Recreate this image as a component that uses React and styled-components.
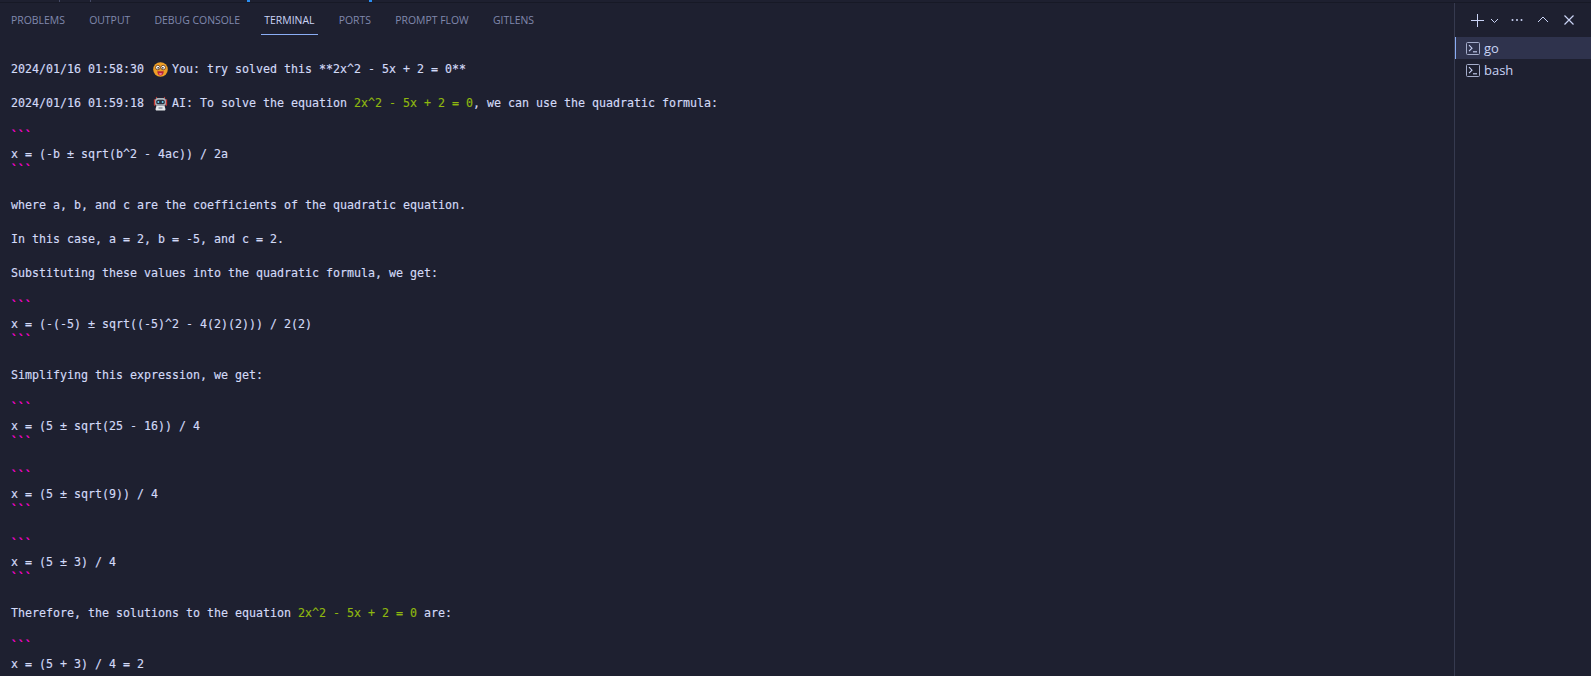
import React from "react";
import styled, { createGlobalStyle } from "styled-components";

const Global = createGlobalStyle`
  html, body { margin: 0; padding: 0; height: 100%; background: #1e2030; overflow: hidden; }
`;

const Page = styled.div`
  height: 676px;
  display: flex;
  flex-direction: column;
  background: #1e2030;
`;

// what is left of the editor's status line above the panel
const TopEdge = styled.div`
  height: 3px;
  box-sizing: border-box;
  flex: none;
  background-color: #1e2030;
  background-image: linear-gradient(#454a66, #454a66), linear-gradient(#454a66, #454a66),
    linear-gradient(#2b8df0, #2b8df0), linear-gradient(#2b8df0, #2b8df0);
  background-size: 1px 2px, 1px 2px, 3px 2px, 3px 2px;
  background-position: 59px 0, 90px 0, 247px 0, 369px 0;
  background-repeat: no-repeat;
  border-bottom: 1px solid #171926;
`;

const Panel = styled.div`
  flex: 1;
  display: grid;
  grid-template-columns: 1fr 137px;
  min-height: 0;
`;

const Main = styled.div`
  display: flex;
  flex-direction: column;
  min-width: 0;
  overflow: hidden;
`;

const TabBar = styled.div`
  display: flex;
  gap: 18.2px;
  height: 32px;
  padding-left: 8px;
  font: 10.45px "Open Sans", sans-serif;
`;

const Tab = styled.div`
  display: flex;
  align-items: center;
  height: 32px;
  padding: 2px 3px 0;
  box-sizing: border-box;
  color: ${(p) => (p.$active ? "#cad3f5" : "#8088ad")};
  border-bottom: 1px solid ${(p) => (p.$active ? "#8aadf4" : "transparent")};
`;

const Output = styled.div`
  padding: 26px 0 0 11px;
  font: 11.63px/17px "DejaVu Sans Mono", monospace;
  color: #d3daf7;
  white-space: pre;
  -webkit-text-stroke: 0.15px currentColor;
`;

const Line = styled.div`
  height: 17px;
  display: flex;
  align-items: center;
`;

const Green = styled.span`
  color: #8fb80f;
`;

const Fence = styled.span`
  color: #ff00d4;
  font-weight: 700;
  transform: translateY(-1px);
`;

const EmojiSlot = styled.svg`
  width: 15px;
  height: 15px;
  margin: 0 4px 0 2px;
  flex: none;
`;

const Side = styled.div`
  border-left: 1px solid #363a4f;
  display: flex;
  flex-direction: column;
`;

const Actions = styled.div`
  height: 34px;
  display: flex;
  align-items: center;
  padding-left: 15px;
  color: #cad3f5;
`;

const ActionIcon = styled.svg`
  flex: none;
  margin-right: ${(p) => p.$gap}px;
`;

const Shell = styled.div`
  height: 22px;
  display: flex;
  align-items: center;
  gap: 4px;
  padding-left: 11px;
  font: 13px "Open Sans", sans-serif;
  color: #cad3f5;
  background: ${(p) => (p.$active ? "#2f334d" : "transparent")};
  box-shadow: ${(p) => (p.$active ? "inset 1px 0 0 #8aadf4" : "none")};
`;

function Stare() {
  return (
    <EmojiSlot viewBox="0 0 14 14">
      <circle cx="7" cy="7" r="6.800" fill="#ee9f26" />
      <circle cx="4.500" cy="5.200" r="2.100" fill="#fff" stroke="#6b3a12" strokeWidth=".8" />
      <circle cx="9.500" cy="5.200" r="2.100" fill="#fff" stroke="#6b3a12" strokeWidth=".8" />
      <circle cx="4.800" cy="5.400" r=".8" fill="#333" />
      <circle cx="9.200" cy="5.400" r=".8" fill="#333" />
      <path d="M4 8.600h6c0 2.600-1.400 4-3 4s-3-1.400-3-4z" fill="#b3213a" />
      <path d="M5.300 11c.6-.9 2.800-.9 3.400 0-.6 1.400-2.800 1.400-3.400 0z" fill="#f37f98" />
    </EmojiSlot>
  );
}

function Robot() {
  return (
    <EmojiSlot viewBox="0 0 14 14">
      <rect x=".8" y="3" width="1.600" height="6" rx=".6" fill="#c7362f" />
      <rect x="11.600" y="3" width="1.600" height="6" rx=".6" fill="#c7362f" />
      <path d="M3 1l1 2M11 1l-1 2" stroke="#c7362f" strokeWidth="1" />
      <rect x="2" y="1.800" width="10" height="7.400" rx="2.500" fill="#aeb6bd" />
      <rect x="3" y="3.400" width="8" height="4.400" rx="1.800" fill="#2a3140" />
      <circle cx="5" cy="5.600" r=".9" fill="#6fd3f2" />
      <circle cx="9" cy="5.600" r=".9" fill="#6fd3f2" />
      <path d="M3.200 9.200h7.600l.8 3c.2.800-.3 1.400-1 1.400H3.400c-.7 0-1.200-.6-1-1.400z" fill="#e4e7ea" />
      <rect x="5" y="10.400" width="4" height="1.400" rx=".5" fill="#8b93a0" />
    </EmojiSlot>
  );
}

function TerminalGlyph() {
  return (
    <svg width="14" height="13" viewBox="0 0 14 13" fill="none" stroke="#cad3f5" style={{ flex: "none" }}>
      <rect x=".5" y=".5" width="13" height="12" rx="1" stroke="#a5adcb" />
      <path d="M3 3.200l3 3-3 3" strokeWidth="1.100" />
      <path d="M7 9.800h4" strokeWidth="1.100" />
    </svg>
  );
}

const fenced = (body) => ["F", body, "F"];

const lines = [
  "HEAD1",
  "",
  "HEAD2",
  "",
  ...fenced("x = (-b ± sqrt(b^2 - 4ac)) / 2a"),
  "",
  "where a, b, and c are the coefficients of the quadratic equation.",
  "",
  "In this case, a = 2, b = -5, and c = 2.",
  "",
  "Substituting these values into the quadratic formula, we get:",
  "",
  ...fenced("x = (-(-5) ± sqrt((-5)^2 - 4(2)(2))) / 2(2)"),
  "",
  "Simplifying this expression, we get:",
  "",
  ...fenced("x = (5 ± sqrt(25 - 16)) / 4"),
  "",
  ...fenced("x = (5 ± sqrt(9)) / 4"),
  "",
  ...fenced("x = (5 ± 3) / 4"),
  "",
  "THEREFORE",
  "",
  "F",
  "x = (5 + 3) / 4 = 2",
];

function renderLine(text) {
  if (text === "F") return <Fence>```</Fence>;
  if (text === "HEAD1")
    return (
      <>
        {"2024/01/16 01:58:30 "}
        <Stare />
        {"You: try solved this **2x^2 - 5x + 2 = 0**"}
      </>
    );
  if (text === "HEAD2")
    return (
      <>
        {"2024/01/16 01:59:18 "}
        <Robot />
        {"AI: To solve the equation "}
        <Green>2x^2 - 5x + 2 = 0</Green>
        {", we can use the quadratic formula:"}
      </>
    );
  if (text === "THEREFORE")
    return (
      <>
        {"Therefore, the solutions to the equation "}
        <Green>2x^2 - 5x + 2 = 0</Green>
        {" are:"}
      </>
    );
  return text;
}

const tabs = ["PROBLEMS", "OUTPUT", "DEBUG CONSOLE", "TERMINAL", "PORTS", "PROMPT FLOW", "GITLENS"];

export default function App() {
  return (
    <Page>
      <Global />
      <TopEdge />
      <Panel>
        <Main>
          <TabBar>
            {tabs.map((t) => (
              <Tab key={t} $active={t === "TERMINAL"}>
                {t}
              </Tab>
            ))}
          </TabBar>
          <Output>
            {lines.map((l, i) => (
              <Line key={i}>{renderLine(l)}</Line>
            ))}
          </Output>
        </Main>
        <Side>
          <Actions>
            <ActionIcon $gap={5} width="15" height="15" viewBox="0 0 15 15" stroke="currentColor" fill="none">
              <path d="M7.500 1v13M1 7.500h13" />
            </ActionIcon>
            <ActionIcon $gap={11} width="9" height="9" viewBox="0 0 9 9" stroke="currentColor" fill="none">
              <path d="M1 3l3.500 3.500L8 3" />
            </ActionIcon>
            <ActionIcon $gap={13} width="14" height="14" viewBox="0 0 14 14" fill="currentColor">
              <circle cx="2.500" cy="7" r="1" />
              <circle cx="7" cy="7" r="1" />
              <circle cx="11.500" cy="7" r="1" />
            </ActionIcon>
            <ActionIcon $gap={14} width="12" height="12" viewBox="0 0 12 12" stroke="currentColor" fill="none">
              <path d="M1 8l5-5 5 5" />
            </ActionIcon>
            <ActionIcon $gap={0} width="12" height="12" viewBox="0 0 12 12" stroke="currentColor" strokeWidth="1.200" fill="none">
              <path d="M1.500 1.500l9 9M10.500 1.500l-9 9" />
            </ActionIcon>
          </Actions>
          <Shell $active>
            <TerminalGlyph />
            go
          </Shell>
          <Shell>
            <TerminalGlyph />
            bash
          </Shell>
        </Side>
      </Panel>
    </Page>
  );
}
